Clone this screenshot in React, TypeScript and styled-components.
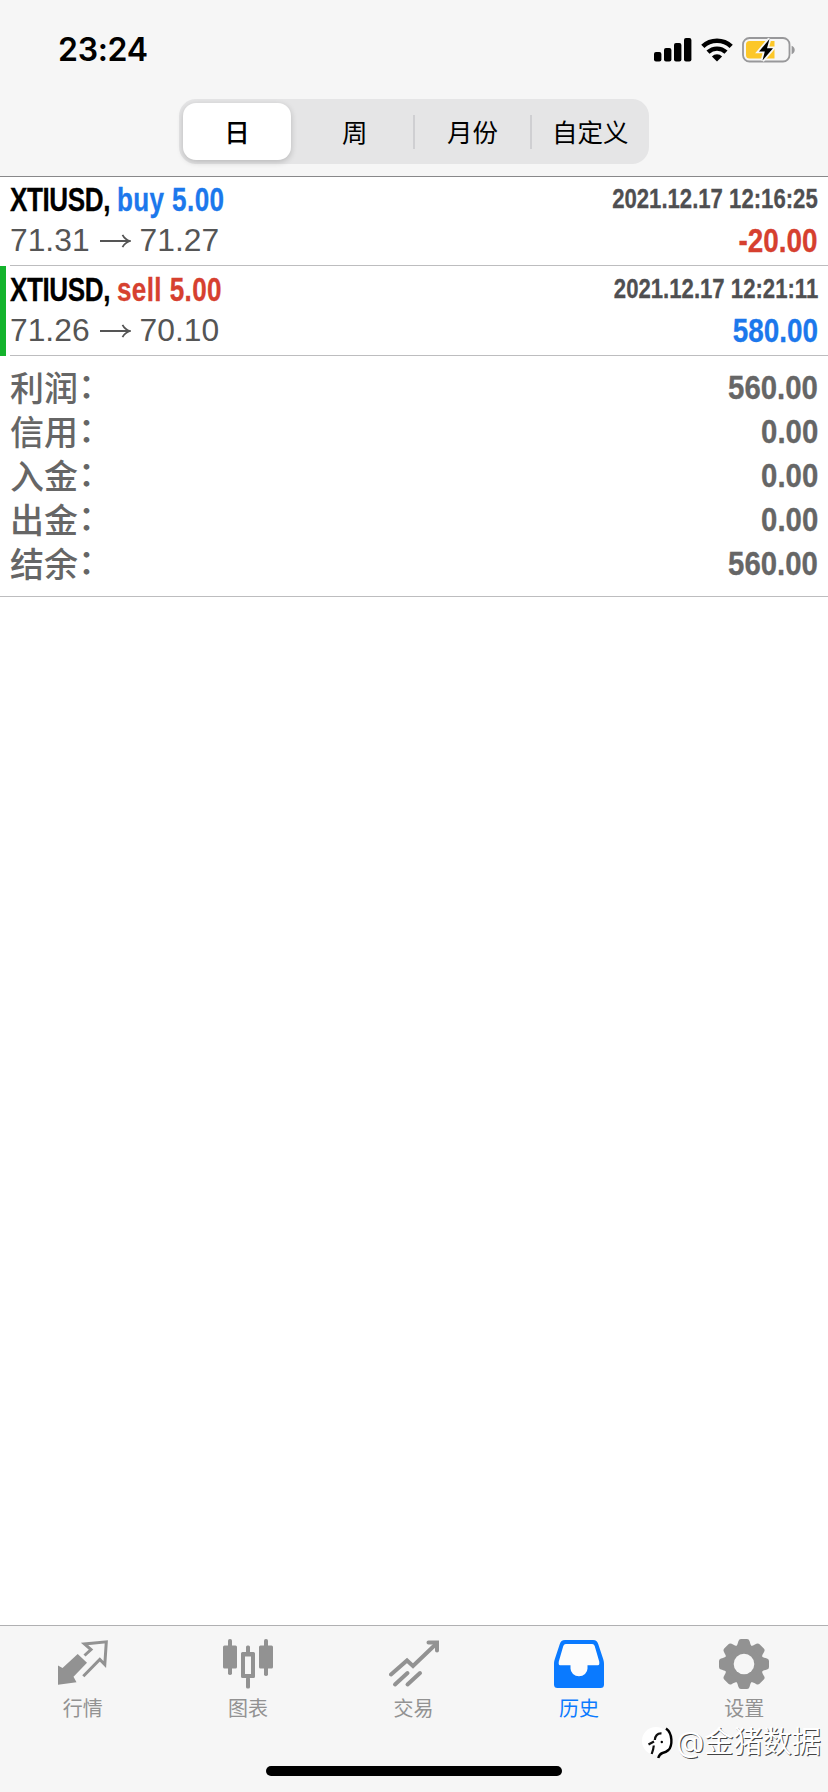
import React from "react";
import styled, { createGlobalStyle } from "styled-components";

const ui = `"Inter", "Noto Sans CJK SC", sans-serif`;
const sans = `"Liberation Sans", Arial, sans-serif`;

const colors = {
  blue: "#1c78ec",
  red: "#d6402f",
  tint: "#0a7aff",
  gray: "#929292",
};

type Deal = {
  symbol: string;
  side: "buy" | "sell";
  volume: string;
  open: string;
  close: string;
  time: string;
  profit: string;
  takeProfit?: boolean;
};

const periods = ["日", "周", "月份", "自定义"];

const deals: Deal[] = [
  {
    symbol: "XTIUSD",
    side: "buy",
    volume: "5.00",
    open: "71.31",
    close: "71.27",
    time: "2021.12.17 12:16:25",
    profit: "-20.00",
  },
  {
    symbol: "XTIUSD",
    side: "sell",
    volume: "5.00",
    open: "71.26",
    close: "70.10",
    time: "2021.12.17 12:21:11",
    profit: "580.00",
    takeProfit: true,
  },
];

const summary = [
  { label: "利润", value: "560.00" },
  { label: "信用", value: "0.00" },
  { label: "入金", value: "0.00" },
  { label: "出金", value: "0.00" },
  { label: "结余", value: "560.00" },
];

const SignalIcon = () => (
  <svg width="38" height="24" viewBox="0 0 38 24">
    <rect x="0" y="14" width="7.4" height="9.4" rx="2" />
    <rect x="10" y="10" width="7.4" height="13.4" rx="2" />
    <rect x="20" y="5" width="7.4" height="18.4" rx="2" />
    <rect x="30" y="0" width="7.4" height="23.4" rx="2" />
  </svg>
);

const WifiIcon = () => (
  <svg width="32" height="24" viewBox="0 0 32 24">
    <path
      d="M1.8 8.4A20.5 20.5 0 0 1 30.2 8.4"
      fill="none"
      stroke="#000"
      strokeWidth="4.6"
    />
    <path
      d="M7 14.2A13 13 0 0 1 25 14.2"
      fill="none"
      stroke="#000"
      strokeWidth="4.4"
    />
    <path d="M16 23.6L10.9 18.4A7.4 7.4 0 0 1 21.1 18.4Z" />
  </svg>
);

const BatteryIcon = () => (
  <svg width="54" height="28" viewBox="0 0 54 28">
    <rect
      x="1"
      y="2"
      width="46.5"
      height="23.5"
      rx="6.5"
      fill="none"
      stroke="#98989a"
      strokeWidth="1.8"
    />
    <path d="M49.6 9.8c4.2 1.6 4.2 6.8 0 8.4z" fill="#98989a" />
    <path
      d="M7.5 5H32.5V22.5H7.5a3.5 3.5 0 0 1-3.5-3.5V8.5a3.5 3.5 0 0 1 3.5-3.5z"
      fill="#fcc729"
    />
    <path
      d="M27.5 3L17 15.5H22.8L20.5 24.5L31 12.2H25Z"
      fill="#000"
      stroke="#f6f6f6"
      strokeWidth="3.6"
      paintOrder="stroke"
    />
  </svg>
);

const QuotesIcon = () => (
  <svg width="50" height="48" viewBox="0 0 50 48">
    <path
      d="M0 25.5L4.5 28L19.7 14L29 22.8L15.5 36.8L18.5 42.3L0 44.7Z"
      fill="currentColor"
    />
    <path
      d="M26.5 15.5L33 9.5L26.5 4L48.3 1.8L46.8 24.5L41.8 19.5L25.3 36.2"
      fill="none"
      stroke="currentColor"
      strokeWidth="3"
    />
  </svg>
);

const ChartIcon = () => (
  <svg width="50" height="50" viewBox="0 0 50 50" fill="currentColor">
    <rect x="5" y="0" width="4" height="36" rx="1.8" />
    <rect x="0" y="6.5" width="14" height="23" rx="1.5" />
    <rect x="41" y="0" width="4" height="37" rx="1.8" />
    <rect x="36" y="6.5" width="14" height="23" rx="1.5" />
    <rect x="23" y="6.5" width="4" height="9" rx="1.5" />
    <rect x="23" y="38" width="4" height="11.5" rx="1.5" />
    <path
      fillRule="evenodd"
      d="M19.5 13h11a1.5 1.5 0 0 1 1.5 1.5v23a1.5 1.5 0 0 1-1.5 1.5h-11a1.5 1.5 0 0 1-1.5-1.5v-23a1.5 1.5 0 0 1 1.5-1.5zM22 17.5v17.5h6v-17.5z"
    />
  </svg>
);

const TradeIcon = () => (
  <svg
    width="50"
    height="48"
    viewBox="0 0 50 48"
    fill="none"
    stroke="currentColor"
    strokeWidth="4"
    strokeLinecap="round"
  >
    <path d="M2 34.5L18 20.5L24 26L47 4" />
    <path d="M39.5 2.5H48V10.5" />
    <path d="M6 44.5L18.5 33M18.5 44.5L31 33" />
  </svg>
);

const HistoryIcon = () => (
  <svg width="50" height="48" viewBox="0 0 50 48">
    <path
      fill="currentColor"
      d="M11 0H39C42 0 43.3 1.5 44.2 4L49 18.5C49.7 20.5 50 22 50 24V44.5Q50 48 46.5 48H3.5Q0 48 0 44.5V24C0 22 .3 20.5 1 18.5L5.8 4C6.7 1.5 8 0 11 0Z"
    />
    <path
      d="M11.8 4H38.2Q40 4 40.7 6L45.2 21.5Q45.8 25.3 44 25.3H33.5V28.5A8.5 7.8 0 0 1 16.5 28.5V25.3H6Q4.2 25.3 4.8 21.5L9.3 6Q10 4 11.8 4Z"
      fill="#fcfcfc"
    />
  </svg>
);

const SettingsIcon = () => (
  <svg width="50" height="50" viewBox="-25 -25 50 50">
    <g fill="currentColor">
      <circle r="19.5" />
      {[0, 45, 90, 135, 180, 225, 270, 315].map((a) => (
        <path
          key={a}
          transform={`rotate(${a})`}
          d="M-9.5 -16.5C-6.5 -18 -6.5 -20 -5.5 -23Q-5 -25 -3 -25H3Q5 -25 5.5 -23C6.5 -20 6.5 -18 9.5 -16.5Z"
        />
      ))}
    </g>
    <circle r="10.3" fill="#f6f6f6" />
  </svg>
);

const Arrow = () => (
  <ArrowSvg width="31" height="14" viewBox="0 0 31 14">
    <path
      d="M0 7H29.5M22.5 .8Q25 5.5 30 7Q25 8.5 22.5 13.2"
      fill="none"
      stroke="currentColor"
      strokeWidth="1.8"
    />
  </ArrowSvg>
);

const WatermarkLogo = () => (
  <svg width="32" height="36" viewBox="0 0 32 36">
    <circle cx="14" cy="17" r="14" fill="#fff" />
    <path
      d="M24 4.5C31 9.5 30.5 22 26.5 26Q24 28.3 20.5 29Q17.5 30 16.2 34"
      fill="none"
      stroke="#000"
      strokeWidth="2.4"
    />
    <path
      d="M9.7 30Q11.5 25 11.8 21.5M12.8 16Q13.5 9 19.5 9.3M6.5 20.5L12 17.5"
      fill="none"
      stroke="#111"
      strokeWidth="2.2"
    />
    <circle cx="19.8" cy="18" r="1.2" />
  </svg>
);

const tabs = [
  { label: "行情", icon: <QuotesIcon /> },
  { label: "图表", icon: <ChartIcon /> },
  { label: "交易", icon: <TradeIcon /> },
  { label: "历史", icon: <HistoryIcon />, active: true },
  { label: "设置", icon: <SettingsIcon /> },
];

const App = () => {
  return (
    <Screen>
      <GlobalStyle />
      <Header>
        <StatusBar>
          <Clock>23:24</Clock>
          <StatusIcons>
            <SignalIcon />
            <WifiIcon />
            <BatteryIcon />
          </StatusIcons>
        </StatusBar>
        <Segments>
          {periods.map((period, i) => (
            <Segment key={period} $active={i === 0} $divider={i > 1}>
              {period}
            </Segment>
          ))}
        </Segments>
      </Header>
      <Main>
        {deals.map((deal) => (
          <DealRow key={deal.time} $marked={deal.takeProfit}>
            <DealBody>
              <Line>
                <Title>
                  {deal.symbol},{" "}
                  <Side $color={deal.side === "buy" ? colors.blue : colors.red}>
                    {deal.side} {deal.volume}
                  </Side>
                </Title>
                <Time>{deal.time}</Time>
              </Line>
              <Line>
                <Prices>
                  {deal.open}
                  <Arrow />
                  {deal.close}
                </Prices>
                <Amount
                  $color={deal.profit.startsWith("-") ? colors.red : colors.blue}
                >
                  {deal.profit}
                </Amount>
              </Line>
            </DealBody>
          </DealRow>
        ))}
        <Summary>
          {summary.map((item) => (
            <SummaryRow key={item.label}>
              <SummaryLabel>
                {item.label}
                <Colon>：</Colon>
              </SummaryLabel>
              <Amount $color="#666" $scale={0.89}>
                {item.value}
              </Amount>
            </SummaryRow>
          ))}
        </Summary>
      </Main>
      <TabBar>
        {tabs.map((tab) => (
          <Tab key={tab.label} $active={tab.active}>
            <TabIcon>{tab.icon}</TabIcon>
            {tab.label}
          </Tab>
        ))}
        <HomeIndicator />
        <Watermark>
          <WatermarkLogo />
          <WatermarkText>@金猪数据</WatermarkText>
        </Watermark>
      </TabBar>
    </Screen>
  );
};

const GlobalStyle = createGlobalStyle`
  * {
    box-sizing: border-box;
  }
  body {
    margin: 0;
    background: #fff;
  }
`;

const Screen = styled.div`
  display: flex;
  flex-direction: column;
  width: 828px;
  height: 1792px;
  overflow: hidden;
  font-family: ${ui};
  background: #fff;
`;

const Header = styled.header`
  height: 177px;
  background: #f6f6f6;
  border-bottom: 1px solid #88888a;
`;

const StatusBar = styled.div`
  display: flex;
  justify-content: space-between;
  height: 99px;
  padding: 0 32px 0 58px;
`;

const Clock = styled.div`
  padding-top: 30px;
  font-size: 32px;
  line-height: 40px;
  font-weight: 600;
  letter-spacing: -0.3px;
`;

const StatusIcons = styled.div`
  display: flex;
  align-items: flex-start;
  gap: 9px;
  padding-top: 36px;

  svg:not(:last-child) {
    margin-top: 2px;
  }
`;

const Segments = styled.div`
  display: flex;
  width: 470px;
  height: 65px;
  margin: 0 auto;
  padding: 4px 0 4px 4px;
  border-radius: 17px;
  background: #e5e5e6;
`;

const Segment = styled.div<{ $active: boolean; $divider: boolean }>`
  display: flex;
  align-items: center;
  justify-content: center;
  position: relative;
  flex: ${(props) => (props.$active ? "0 0 108px" : "1")};
  margin-right: ${(props) => (props.$active ? "5px" : "0")};
  padding-bottom: 3px;
  border-radius: 13px;
  font-size: 25.5px;
  font-weight: ${(props) => (props.$active ? 500 : 400)};
  background: ${(props) => (props.$active ? "#fff" : "none")};
  box-shadow: ${(props) =>
    props.$active ? "0 2px 6px rgba(0, 0, 0, 0.2)" : "none"};

  &::before {
    content: "";
    display: ${(props) => (props.$divider ? "block" : "none")};
    position: absolute;
    left: -1px;
    top: 12px;
    width: 2px;
    height: 34px;
    background: #cfcfd2;
  }
`;

const Main = styled.main`
  flex: 1;
`;

const DealRow = styled.div<{ $marked?: boolean }>`
  padding-left: 4px;
  border-left: 6px solid
    ${(props) => (props.$marked ? "#14b32c" : "transparent")};
`;

const DealBody = styled.div`
  height: 89px;
  padding: 2px 10px 0 0;
  border-bottom: 1px solid #bdbdbf;

  ${DealRow}:nth-child(2) & {
    height: 90px;
    padding-top: 3px;
  }
`;

const Line = styled.div`
  display: flex;
  justify-content: space-between;
  align-items: center;
  height: 41px;
`;

// condensed bold look
const Condensed = styled.div`
  font-family: ${sans};
  font-weight: 700;
  -webkit-text-stroke: 0.3px;
`;

const Title = styled(Condensed)`
  font-size: 33px;
  letter-spacing: -0.5px;
  color: #000;
  transform: scaleX(0.79);
  transform-origin: left;
`;

const Side = styled.span<{ $color: string }>`
  letter-spacing: 0.5px;
  color: ${(props) => props.$color};
`;

const Time = styled(Condensed)`
  font-size: 27px;
  color: #4f4f51;
  transform: scaleX(0.82);
  transform-origin: right;
`;

const Prices = styled.div`
  display: flex;
  align-items: center;
  font-family: ${sans};
  font-size: 31.8px;
  color: #555;
`;

const ArrowSvg = styled.svg`
  margin: 0 9px 0 10px;
`;

const Amount = styled(Condensed)<{ $color: string; $scale?: number }>`
  font-size: 33px;
  color: ${(props) => props.$color};
  transform: scaleX(${(props) => props.$scale ?? 0.845});
  transform-origin: right;
`;

const Summary = styled.div`
  padding: 10px;
  border-bottom: 1px solid #bdbdbf;
`;

const SummaryRow = styled.div`
  display: flex;
  justify-content: space-between;
  align-items: center;
  height: 44px;
`;

const SummaryLabel = styled.div`
  padding-bottom: 3px;
  font-family: "Noto Sans CJK SC", sans-serif;
  font-size: 34px;
  line-height: 41px;
  font-weight: 500;
  color: #666;
`;

const Colon = styled.span`
  position: relative;
  top: -3px;
`;

const TabBar = styled.nav`
  display: flex;
  position: relative;
  height: 167px;
  padding: 13px 1px 0 0;
  border-top: 1px solid #b0b0b2;
  background: #f6f6f6;
`;

const Tab = styled.div<{ $active?: boolean }>`
  display: flex;
  flex: 1;
  flex-direction: column;
  align-items: center;
  font-size: 20px;
  line-height: 28px;
  color: ${(props) => (props.$active ? colors.tint : colors.gray)};
`;

const TabIcon = styled.div`
  display: flex;
  align-items: center;
  height: 50px;
  margin-bottom: 6px;
`;

const HomeIndicator = styled.div`
  position: absolute;
  left: 266px;
  bottom: 16px;
  width: 296px;
  height: 10px;
  border-radius: 5px;
  background: #000;
`;

const Watermark = styled.div`
  display: flex;
  align-items: center;
  position: absolute;
  left: 642px;
  top: 98px;
`;

const WatermarkText = styled.div`
  padding-left: 2px;
  font-size: 29.2px;
  line-height: 36px;
  font-weight: 400;
  color: #fff;
  text-shadow: 1px 1px 0.5px #444;
`;

export default App;
